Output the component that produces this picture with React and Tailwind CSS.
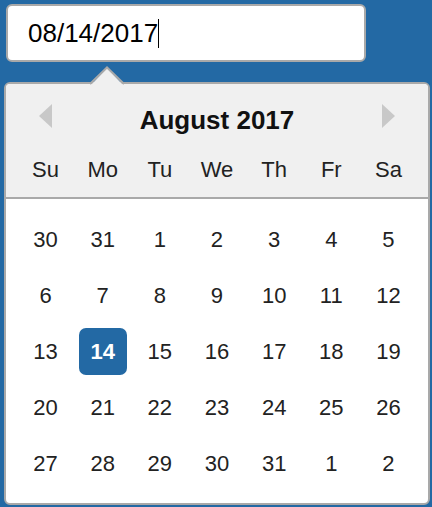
import React from "react";

const WEEKDAYS = ["Su", "Mo", "Tu", "We", "Th", "Fr", "Sa"];

const WEEKS = [
  [30, 31, 1, 2, 3, 4, 5],
  [6, 7, 8, 9, 10, 11, 12],
  [13, 14, 15, 16, 17, 18, 19],
  [20, 21, 22, 23, 24, 25, 26],
  [27, 28, 29, 30, 31, 1, 2],
];

function DayCell({ day, selected }) {
  return (
    <div className="flex h-[56px] items-center justify-center">
      {selected ? (
        <div className="flex h-[47px] w-[48px] items-center justify-center rounded-[7px] bg-[#2369a4] text-[22px] font-bold text-white">
          {day}
        </div>
      ) : (
        <span className="text-[22px] text-[#222]">{day}</span>
      )}
    </div>
  );
}

export default function App() {
  return (
    <div
      className="min-h-[507px] w-[432px] bg-[#2369a4] pl-[4px] pt-[4px]"
      style={{ fontFamily: '"Liberation Sans", Arial, sans-serif' }}
    >
      {/* date input with caret */}
      <div className="ml-[2px] flex h-[58px] w-[360px] items-center rounded-[6px] border-2 border-[#a9a9a9] bg-white pl-[20px]">
        <span className="text-[26px] leading-none text-black">08/14/2017</span>
        <div className="h-[29px] w-px bg-black" />
      </div>

      {/* calendar dropdown */}
      <div className="relative mt-[20px] w-[426px] rounded-[6px] border-2 border-[#a9a9a9] bg-white">
        <svg
          className="absolute left-[84px] top-[-18px]"
          width="34"
          height="20"
          viewBox="0 0 34 20"
        >
          <polygon points="0,20 17,2 34,20" fill="#f0f0f0" />
          <polyline
            points="0,18 17,1.5 34,18"
            fill="none"
            stroke="#a9a9a9"
            strokeWidth="2"
          />
        </svg>

        <div className="rounded-t-[4px] border-b-2 border-[#a9a9a9] bg-[#f0f0f0] px-[11px] pt-[14px]">
          <div className="grid h-[44px] grid-cols-7 items-center">
            <div className="mb-[9px] flex justify-center">
              <div className="h-0 w-0 border-y-[12px] border-r-[13px] border-y-transparent border-r-[#c8c8c8]" />
            </div>
            <div className="col-span-5 text-center text-[26px] font-bold text-[#111]">
              August 2017
            </div>
            <div className="mb-[9px] flex justify-center">
              <div className="h-0 w-0 border-y-[12px] border-l-[13px] border-y-transparent border-l-[#c8c8c8]" />
            </div>
          </div>
          <div className="grid h-[55px] grid-cols-7 items-center">
            {WEEKDAYS.map((d) => (
              <div key={d} className="text-center text-[22px] text-[#222]">
                {d}
              </div>
            ))}
          </div>
        </div>

        <div className="px-[11px] py-[12px]">
          {WEEKS.map((week, wi) => (
            <div key={wi} className="grid grid-cols-7">
              {week.map((day, di) => (
                <DayCell key={di} day={day} selected={wi === 2 && day === 14} />
              ))}
            </div>
          ))}
        </div>
      </div>
    </div>
  );
}
